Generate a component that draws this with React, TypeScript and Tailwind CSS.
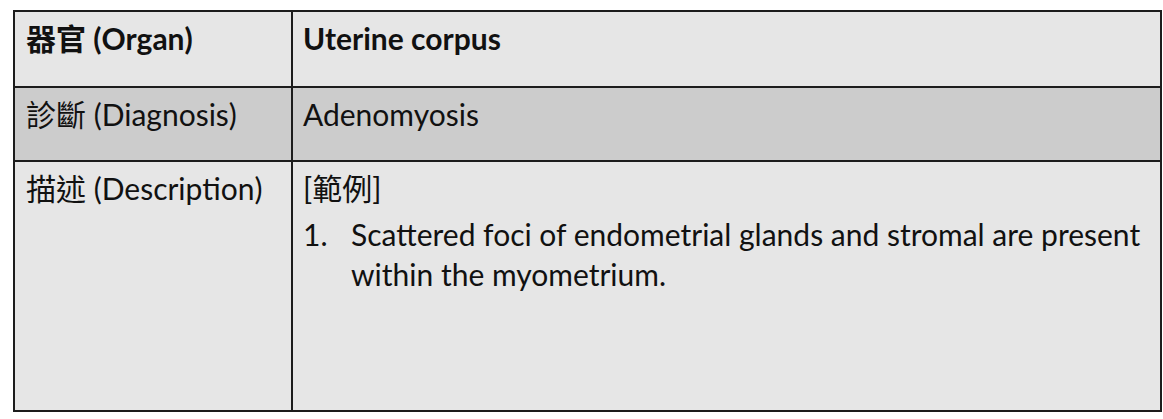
const latin = "font-['Lato','Noto_Sans_CJK_TC',sans-serif]";

function Row({
  bg,
  height,
  label,
  children,
}: {
  bg: string;
  height: string;
  label: React.ReactNode;
  children: React.ReactNode;
}) {
  return (
    <div className={`flex ${bg} ${height} border-b-2 border-[#1c1c1c] last:border-b-0`}>
      <div className="w-[278px] shrink-0 border-r-2 border-[#1c1c1c] pl-[11px] pt-[6px]">{label}</div>
      <div className="flex-1 pl-[10px] pr-[12px] pt-[6px]">{children}</div>
    </div>
  );
}

export default function App() {
  return (
    <div className={`w-[1163px] h-[419px] bg-white pt-[10px] pl-[13px] ${latin} text-[30px] leading-[40px] text-[#111]`}>
      <div className="w-[1149px] border-2 border-[#1c1c1c]">
        <Row bg="bg-[#e6e6e6]" height="h-[76px]" label={<span className="font-bold">器官 (Organ)</span>}>
          <span className="font-bold">Uterine corpus</span>
        </Row>
        <Row bg="bg-[#cccccc]" height="h-[74px]" label={<span>診斷 (Diagnosis)</span>}>
          <span>Adenomyosis</span>
        </Row>
        <Row bg="bg-[#e6e6e6]" height="h-[248px]" label={<span>描述 (Description)</span>}>
          <div>[範例]</div>
          <ol className="mt-[6px]">
            <li className="flex">
              <span className="w-[48px] shrink-0">1.</span>
              <span>Scattered foci of endometrial glands and stromal are present within the myometrium.</span>
            </li>
          </ol>
        </Row>
      </div>
    </div>
  );
}
